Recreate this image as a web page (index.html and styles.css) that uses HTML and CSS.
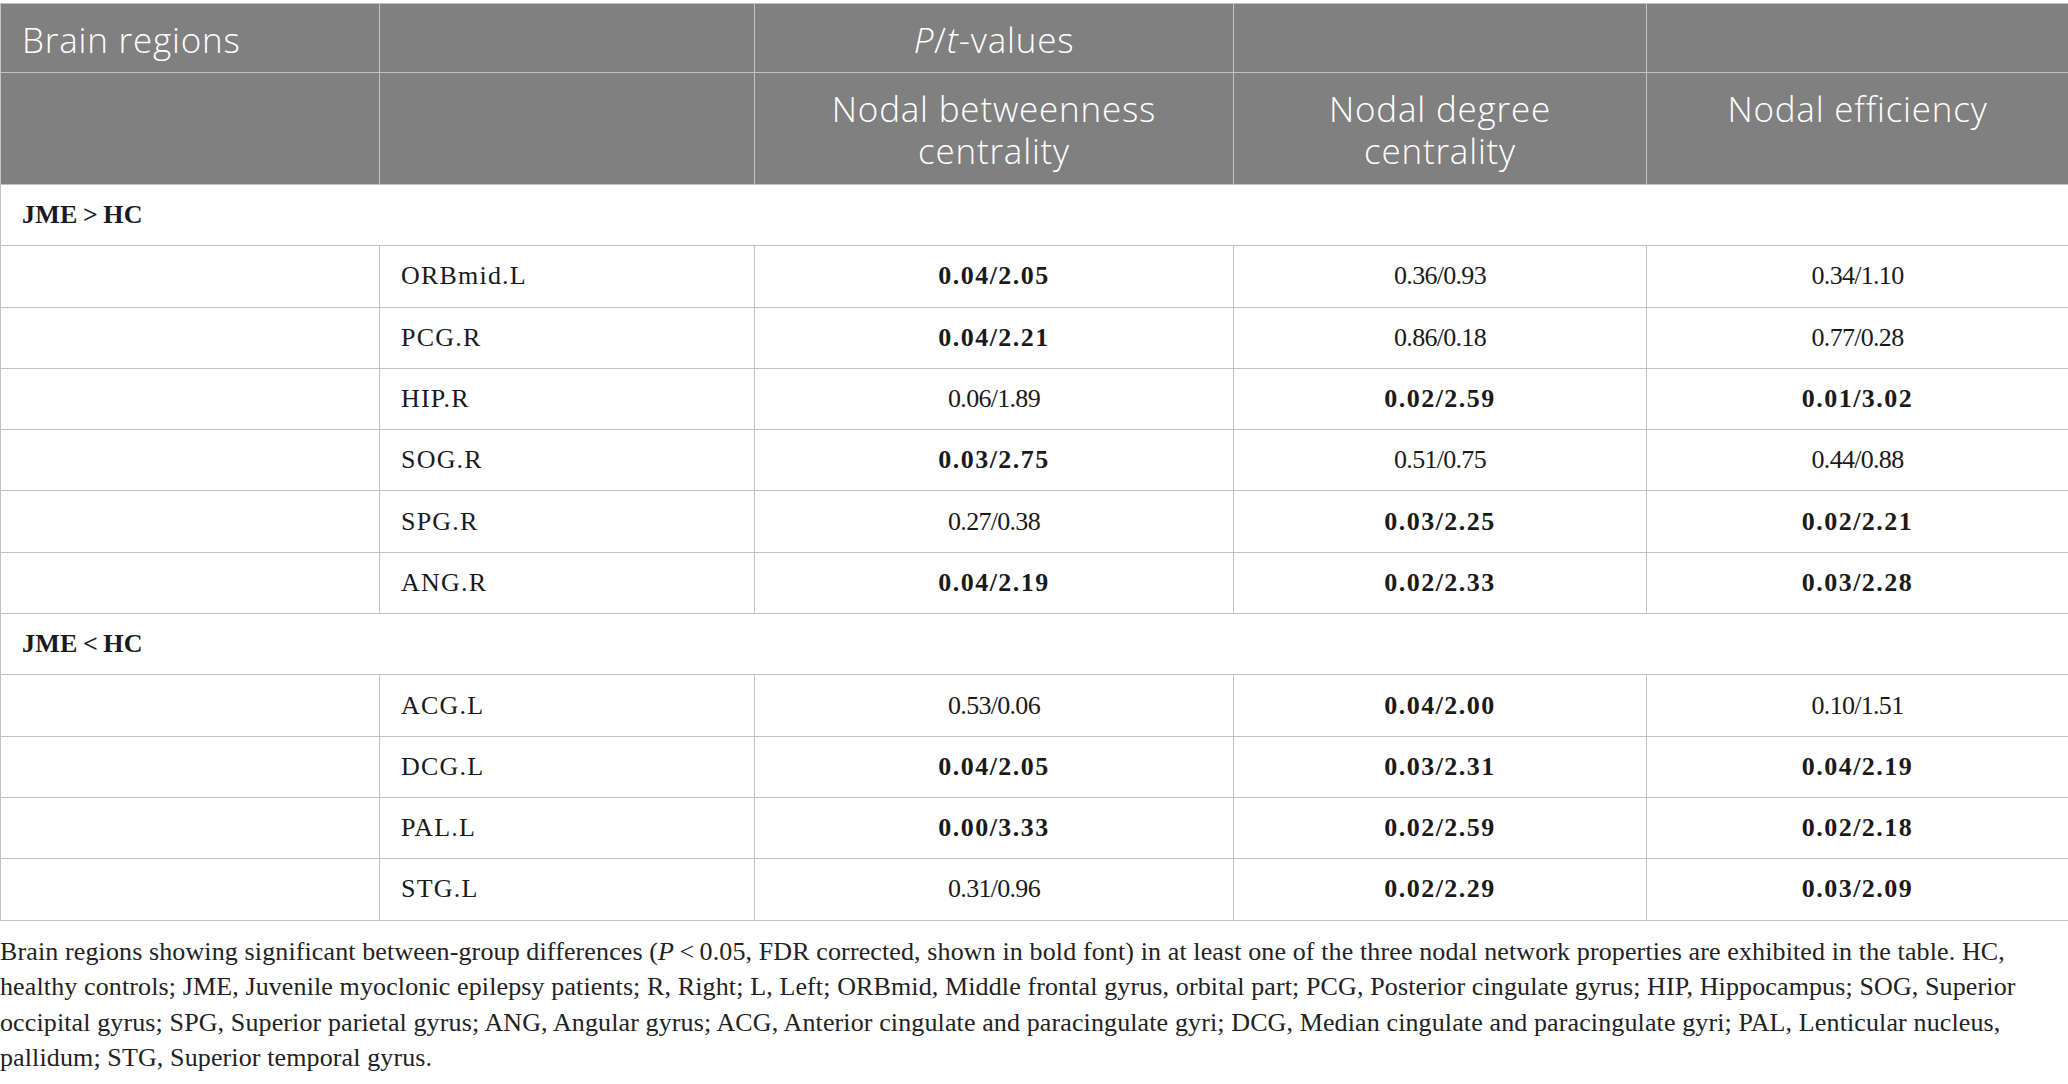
FILE: index.html
```html
<!DOCTYPE html>
<html lang="en">
<head>
    <meta charset="UTF-8">
    <meta name="viewport" content="width=device-width, initial-scale=1.0">
    <title>Nodal network properties</title>
    <link rel="stylesheet" href="styles.css">
</head>
<body>
    <table class="results-table">
        <colgroup>
            <col class="col-group">
            <col class="col-region">
            <col class="col-betweenness">
            <col class="col-degree">
            <col class="col-efficiency">
        </colgroup>
        <thead>
            <tr class="head-top">
                <th class="left">Brain regions</th>
                <th></th>
                <th><i>P</i>/<i>t</i>-values</th>
                <th></th>
                <th></th>
            </tr>
            <tr class="head-sub">
                <th></th>
                <th></th>
                <th>Nodal betweenness centrality</th>
                <th>Nodal degree centrality</th>
                <th>Nodal efficiency</th>
            </tr>
        </thead>
        <tbody>
            <tr class="section">
                <td colspan="5">JME&thinsp;&gt;&thinsp;HC</td>
            </tr>
            <tr>
                <td></td>
                <td class="region">ORBmid.L</td>
                <td><b>0.04/2.05</b></td>
                <td>0.36/0.93</td>
                <td>0.34/1.10</td>
            </tr>
            <tr>
                <td></td>
                <td class="region">PCG.R</td>
                <td><b>0.04/2.21</b></td>
                <td>0.86/0.18</td>
                <td>0.77/0.28</td>
            </tr>
            <tr>
                <td></td>
                <td class="region">HIP.R</td>
                <td>0.06/1.89</td>
                <td><b>0.02/2.59</b></td>
                <td><b>0.01/3.02</b></td>
            </tr>
            <tr>
                <td></td>
                <td class="region">SOG.R</td>
                <td><b>0.03/2.75</b></td>
                <td>0.51/0.75</td>
                <td>0.44/0.88</td>
            </tr>
            <tr>
                <td></td>
                <td class="region">SPG.R</td>
                <td>0.27/0.38</td>
                <td><b>0.03/2.25</b></td>
                <td><b>0.02/2.21</b></td>
            </tr>
            <tr>
                <td></td>
                <td class="region">ANG.R</td>
                <td><b>0.04/2.19</b></td>
                <td><b>0.02/2.33</b></td>
                <td><b>0.03/2.28</b></td>
            </tr>
            <tr class="section">
                <td colspan="5">JME&thinsp;&lt;&thinsp;HC</td>
            </tr>
            <tr>
                <td></td>
                <td class="region">ACG.L</td>
                <td>0.53/0.06</td>
                <td><b>0.04/2.00</b></td>
                <td>0.10/1.51</td>
            </tr>
            <tr>
                <td></td>
                <td class="region">DCG.L</td>
                <td><b>0.04/2.05</b></td>
                <td><b>0.03/2.31</b></td>
                <td><b>0.04/2.19</b></td>
            </tr>
            <tr>
                <td></td>
                <td class="region">PAL.L</td>
                <td><b>0.00/3.33</b></td>
                <td><b>0.02/2.59</b></td>
                <td><b>0.02/2.18</b></td>
            </tr>
            <tr>
                <td></td>
                <td class="region">STG.L</td>
                <td>0.31/0.96</td>
                <td><b>0.02/2.29</b></td>
                <td><b>0.03/2.09</b></td>
            </tr>
        </tbody>
    </table>

    <p class="footnote">Brain regions showing significant between-group differences (<i>P</i>&thinsp;&lt;&thinsp;0.05, FDR corrected, shown in bold font) in at least one of the three nodal network properties are exhibited in the table. HC, healthy controls; JME, Juvenile myoclonic epilepsy patients; R, Right; L, Left; ORBmid, Middle frontal gyrus, orbital part; PCG, Posterior cingulate gyrus; HIP, Hippocampus; SOG, Superior occipital gyrus; SPG, Superior parietal gyrus; ANG, Angular gyrus; ACG, Anterior cingulate and paracingulate gyri; DCG, Median cingulate and paracingulate gyri; PAL, Lenticular nucleus, pallidum; STG, Superior temporal gyrus.</p>
</body>
</html>
```

FILE: styles.css
```css
body {
    margin: 0;
    padding-top: 3px;
    background-color: #ffffff;
    font-family: "Liberation Serif", "Times New Roman", serif;
    color: #1a1a1a;
}

.results-table {
    width: 2068px;
    table-layout: fixed;
    border-collapse: collapse;
}

.col-group { width: 379px; }
.col-region { width: 375px; }
.col-betweenness { width: 479px; }
.col-degree { width: 413px; }
.col-efficiency { width: 422px; }

.results-table th,
.results-table td {
    border: 1px solid #c2c2c2;
}

.results-table th {
    background-color: #7f807f;
    color: #ffffff;
    font-family: "Open Sans", "Noto Sans", sans-serif;
    font-weight: 300;
    font-size: 35px;
    line-height: 42px;
    letter-spacing: 0.8px;
    text-align: center;
    vertical-align: top;
    padding: 15px 21px 0;
}

.results-table th.left {
    text-align: left;
}

.head-top th {
    height: 53px;
}

.head-sub th {
    height: 96px;
}

.results-table td {
    height: 60.3px;
    padding: 0 21px;
    font-size: 26px;
    letter-spacing: -0.7px;
    text-align: center;
    vertical-align: middle;
}

.results-table td b {
    letter-spacing: 1.5px;
}

.results-table td.region {
    text-align: left;
    letter-spacing: 1.2px;
}

.section td {
    text-align: left;
    font-weight: bold;
    letter-spacing: 0.2px;
}

.footnote {
    margin: 13px 0 0;
    font-size: 26px;
    line-height: 35.5px;
    letter-spacing: 0.12px;
    color: #222222;
}
```
